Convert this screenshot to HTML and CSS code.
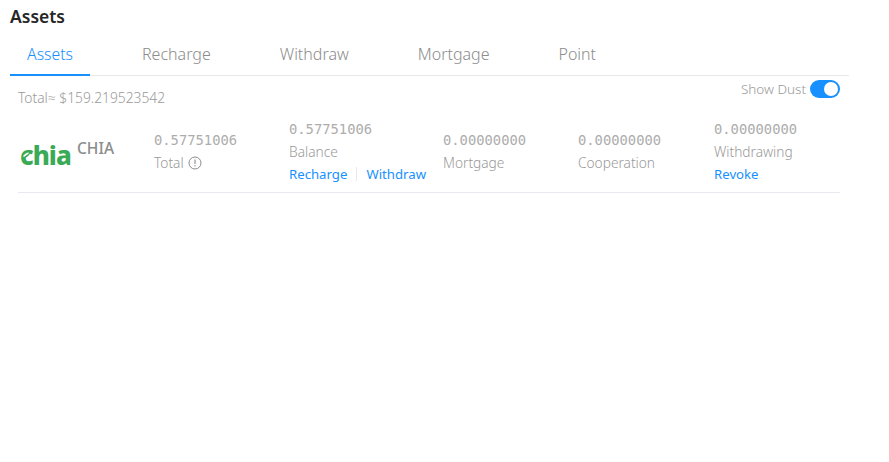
FILE: index.html
```html
<!DOCTYPE html>
<html>
<head>
    <title>Assets</title>
    <meta charset="UTF-8">
    <link rel="stylesheet" href="styles.css">
</head>
<body>
    <h1 class="page-title">Assets</h1>

    <div class="tabs">
        <a class="tab active">Assets</a>
        <a class="tab">Recharge</a>
        <a class="tab">Withdraw</a>
        <a class="tab">Mortgage</a>
        <a class="tab">Point</a>
    </div>

    <div class="panel">
        <div class="summary">
            <span class="total">Total≈ $159.219523542</span>
            <div class="dust">
                <span>Show Dust</span>
                <span class="switch"><span class="knob"></span></span>
            </div>
        </div>

        <div class="coin-row">
            <div class="col col-coin">
                <span class="logo">
                    <span class="logo-text">chia</span>
                    <svg class="leaf" width="15" height="14" viewBox="0 0 15 14">
                        <path d="M0 12.500C2 11.800 2.500 10.500 3.500 8 5 4.500 8 2.500 12 2 11.500 6 9 9.500 5 10 3.500 10.200 2 11 0 12.500Z" fill="#3aaa57"/>
                        <path d="M4.500 8.500C6 6.800 7.500 5.800 9.500 5" stroke="#fff" stroke-width="1.400" fill="none"/>
                    </svg>
                </span>
                <span class="coin-name">CHIA</span>
            </div>
            <div class="col col-std">
                <div class="num">0.57751006</div>
                <div class="label">Total
                    <svg class="info" width="14" height="14" viewBox="0 0 14 14">
                        <circle cx="7" cy="7" r="6" fill="none" stroke="#8c8c8c" stroke-width="1"/>
                        <path d="M7 3.500V8M7 9.300V10.500" stroke="#8c8c8c" stroke-width="1.100" fill="none"/>
                    </svg>
                </div>
            </div>
            <div class="col col-wide">
                <div class="num">0.57751006</div>
                <div class="label">Balance</div>
                <div class="links"><a>Recharge</a><span class="sep"></span><a>Withdraw</a></div>
            </div>
            <div class="col col-std">
                <div class="num">0.00000000</div>
                <div class="label">Mortgage</div>
            </div>
            <div class="col col-last">
                <div class="num">0.00000000</div>
                <div class="label">Cooperation</div>
            </div>
            <div class="col">
                <div class="num">0.00000000</div>
                <div class="label">Withdrawing</div>
                <div class="links"><a>Revoke</a></div>
            </div>
        </div>
    </div>
</body>
</html>
```

FILE: styles.css
```css
html {
    font-family: "Noto Sans", "Open Sans", Arial, sans-serif;
    font-weight: 300;
}
body {
    margin: 0;
    padding: 0 40px 0 10px;
    background-color: #fff;
    color: #999;
}
.page-title {
    margin: 0;
    padding-top: 5px;
    height: 31px;
    box-sizing: border-box;
    font-size: 17.500px;
    line-height: 22px;
    font-weight: 600;
    color: #262626;
}
.tabs {
    display: flex;
    height: 45px;
    box-sizing: border-box;
    border-bottom: 1px solid #e8e8e8;
}
.tab {
    padding: 0 17px;
    margin-right: 35px;
    font-size: 16px;
    line-height: 46px;
    color: #8c8c8c;
}
.tab.active {
    width: 80px;
    padding: 0;
    font-size: 15.800px;
    text-align: center;
    color: #1890ff;
    height: 45px;
    box-sizing: border-box;
    border-bottom: 2px solid #1890ff;
}
.panel {
    padding: 0 9px 0 8px;
}
.summary {
    display: flex;
    justify-content: space-between;
    height: 36px;
    font-size: 13.800px;
}
.total {
    padding-top: 13px;
    line-height: 18px;
}
.dust {
    display: flex;
    align-items: center;
    gap: 4px;
    height: 18px;
    margin-top: 4px;
    font-size: 13.500px;
}
.switch {
    display: block;
    position: relative;
    width: 30px;
    height: 18px;
    border-radius: 9px;
    background-color: #1890ff;
}
.knob {
    position: absolute;
    top: 2px;
    right: 2px;
    width: 14px;
    height: 14px;
    border-radius: 50%;
    background-color: #fff;
}
.coin-row {
    display: flex;
    align-items: center;
    height: 81px;
    box-sizing: border-box;
    padding-bottom: 1px;
    border-bottom: 1px solid #e8e8f0;
}
.col {
    font-size: 13.700px;
}
.col-coin {
    display: flex;
    align-items: center;
    width: 136px;
}
.col-std {
    width: 135px;
}
.col-wide {
    width: 154px;
}
.col-last {
    width: 136px;
}
.logo {
    display: block;
    position: relative;
    margin: 7px 5px 0 2px;
    width: 52px;
    color: #3aaa57;
}
.leaf {
    position: absolute;
    left: -1px;
    top: 5px;
}
.logo-text {
    display: block;
    font-size: 26px;
    line-height: 24px;
    font-weight: 800;
    letter-spacing: -1px;
}
.coin-name {
    margin-top: -8px;
    font-size: 15.500px;
    font-weight: 500;
    color: #8c8c8c;
}
.num {
    font-family: "DejaVu Sans Mono", monospace;
    font-size: 13.800px;
    line-height: 22px;
    margin-bottom: 1px;
    color: #adadad;
}
.label {
    display: flex;
    align-items: center;
    gap: 4px;
    line-height: 22px;
}
.info {
    display: block;
}
.links {
    display: flex;
    align-items: center;
    line-height: 22px;
    font-size: 13.200px;
    color: #1890ff;
    font-weight: 400;
}
.sep {
    width: 1px;
    height: 14px;
    margin: 0 9px;
    background-color: #e8e8e8;
}
```
